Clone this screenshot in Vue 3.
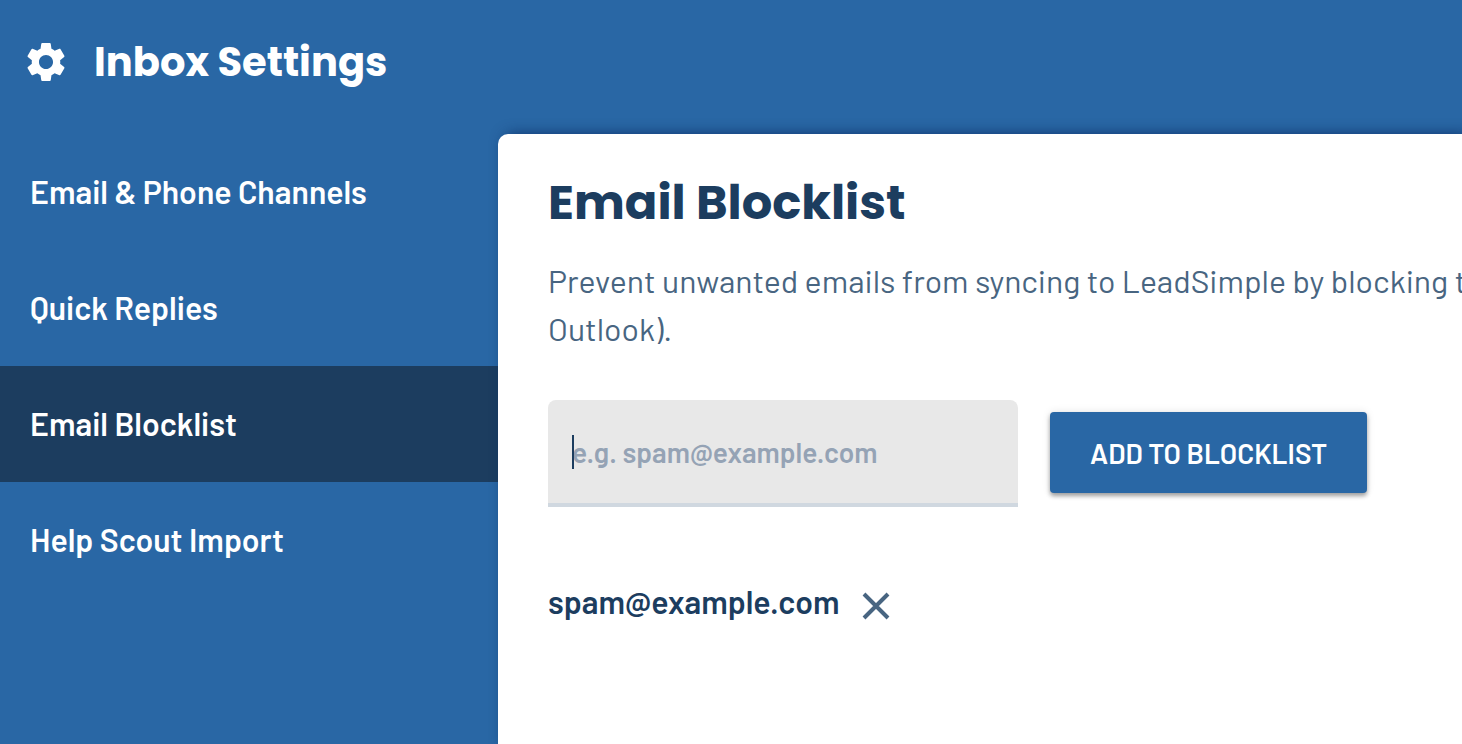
<script setup>
import { ref } from 'vue'

const sections = ['Email & Phone Channels', 'Quick Replies', 'Email Blocklist', 'Help Scout Import']
const active = ref('Email Blocklist')
const blocked = ref(['spam@example.com'])
const entry = ref('')

function add() {
  const value = entry.value.trim()
  if (value) blocked.value.push(value)
  entry.value = ''
}

function remove(address) {
  blocked.value = blocked.value.filter((item) => item !== address)
}
</script>

<template>
  <div class="app">
    <header class="header">
      <svg class="gear" viewBox="2 2 20 20" aria-hidden="true">
        <path d="M19.43 12.98c.04-.32.07-.64.07-.98s-.03-.66-.07-.98l2.11-1.65c.19-.15.24-.42.12-.64l-2-3.46c-.12-.22-.39-.3-.61-.22l-2.49 1c-.52-.4-1.08-.73-1.69-.98l-.38-2.65C14.46 2.18 14.25 2 14 2h-4c-.25 0-.46.18-.49.42l-.38 2.65c-.61.25-1.17.59-1.69.98l-2.49-1c-.23-.09-.49 0-.61.22l-2 3.46c-.13.22-.07.49.12.64l2.11 1.65c-.04.32-.07.65-.07.98s.03.66.07.98l-2.11 1.65c-.19.15-.24.42-.12.64l2 3.46c.12.22.39.3.61.22l2.49-1c.52.4 1.08.73 1.69.98l.38 2.65c.03.24.24.42.49.42h4c.25 0 .46-.18.49-.42l.38-2.65c.61-.25 1.17-.59 1.69-.98l2.49 1c.23.09.49 0 .61-.22l2-3.46c.12-.22.07-.49-.12-.64l-2.11-1.65zM12 15.7c-2.04 0-3.7-1.66-3.7-3.7s1.66-3.7 3.7-3.7 3.7 1.66 3.7 3.7-1.66 3.7-3.7 3.7z" />
      </svg>
      <h1>Inbox Settings</h1>
    </header>

    <div class="body">
      <nav class="nav">
        <a
          v-for="section in sections"
          :key="section"
          href="#"
          :class="{ active: section === active }"
          @click.prevent="active = section"
        >{{ section }}</a>
      </nav>

      <main class="panel">
        <h2>Email Blocklist</h2>
        <p class="intro">
          Prevent unwanted emails from syncing to LeadSimple by blocking t<br />Outlook).
        </p>

        <form class="form" @submit.prevent="add">
          <div class="field">
            <input v-model="entry" type="text" aria-label="Email address" placeholder="e.g. spam@example.com" />
            <span v-if="!entry" class="caret"></span>
          </div>
          <button class="add" type="submit">ADD TO BLOCKLIST</button>
        </form>

        <ul class="list">
          <li v-for="address in blocked" :key="address">
            <span class="address">{{ address }}</span>
            <button class="remove" type="button" aria-label="Remove" @click="remove(address)">
              <svg viewBox="0 0 28 28" aria-hidden="true"><path d="M2 2L26 26M26 2L2 26" /></svg>
            </button>
          </li>
        </ul>
      </main>
    </div>
  </div>
</template>

<style>
body {
  margin: 0;
  background: #2967a5;
}
</style>

<style scoped>
.app {
  display: flex;
  flex-direction: column;
  min-height: 100vh;
  overflow: hidden;
  background: #2967a5;
  color: #1c3d5f;
  font-family: Barlow, Roboto, sans-serif;
}

.header {
  display: flex;
  align-items: center;
  gap: 29px;
  height: 124px;
  padding: 0 27px;
  color: #fff;
}

.gear {
  width: 38px;
  height: 40px;
  fill: currentColor;
}

h1,
h2 {
  margin: 0;
  font-family: Poppins, Inter, sans-serif;
  font-weight: 700;
}

h1 {
  font-size: 40px;
  line-height: 60px;
}

.body {
  display: flex;
  flex: 1;
  padding-top: 10px;
}

.nav {
  flex: 0 0 498px;
}

.nav a {
  box-sizing: border-box;
  display: flex;
  align-items: center;
  height: 116px;
  padding: 0 30px 2px;
  color: #fff;
  font-size: 32px;
  font-weight: 600;
  text-decoration: none;
}

.nav a.active {
  background: #1c3d5f;
}

.panel {
  flex: 1;
  min-width: 0;
  padding: 33px 0 0 50px;
  border-radius: 10px 0 0 0;
  background: #fff;
  box-shadow: 6px 0 14px rgba(10, 45, 100, 0.85);
}

h2 {
  font-size: 48px;
  line-height: 72px;
}

.intro {
  margin: 17px 0 0;
  color: #486581;
  font-size: 32px;
  font-weight: 400;
  line-height: 48px;
  white-space: nowrap;
}

.form {
  display: flex;
  align-items: center;
  gap: 32px;
  margin-top: 48px;
}

.field {
  position: relative;
  width: 470px;
}

.field input {
  box-sizing: border-box;
  display: block;
  width: 100%;
  height: 107px;
  padding: 0 24px;
  border: 0;
  border-bottom: 4px solid #d0d8e0;
  border-radius: 8px 8px 0 0;
  outline: 0;
  background: #e8e8e8;
  color: #1c3d5f;
  font: 600 28px Barlow, Roboto, sans-serif;
}

.field input::placeholder {
  color: #95a3b5;
  opacity: 1;
}

.caret {
  position: absolute;
  top: 35px;
  left: 24px;
  width: 2px;
  height: 34px;
  background: #1c3d5f;
}

.add {
  height: 81px;
  margin-bottom: 2px;
  padding: 0 40px;
  border: 0;
  border-radius: 4px;
  background: #2967a5;
  box-shadow: 0 3px 4px rgba(0, 0, 0, 0.35), 0 0 8px rgba(0, 0, 0, 0.1);
  color: #fff;
  font: 600 28px Barlow, Roboto, sans-serif;
  cursor: pointer;
}

.list {
  margin: 76px 0 0;
  padding: 0;
  list-style: none;
}

.list li {
  display: flex;
  align-items: center;
  gap: 22px;
  height: 46px;
  font-size: 32px;
  font-weight: 600;
}

.address {
  padding-bottom: 10px;
}

.remove {
  padding: 0;
  border: 0;
  background: none;
  cursor: pointer;
}

.remove svg {
  display: block;
  width: 28px;
  height: 28px;
  fill: none;
  stroke: #486581;
  stroke-width: 4;
}
</style>
